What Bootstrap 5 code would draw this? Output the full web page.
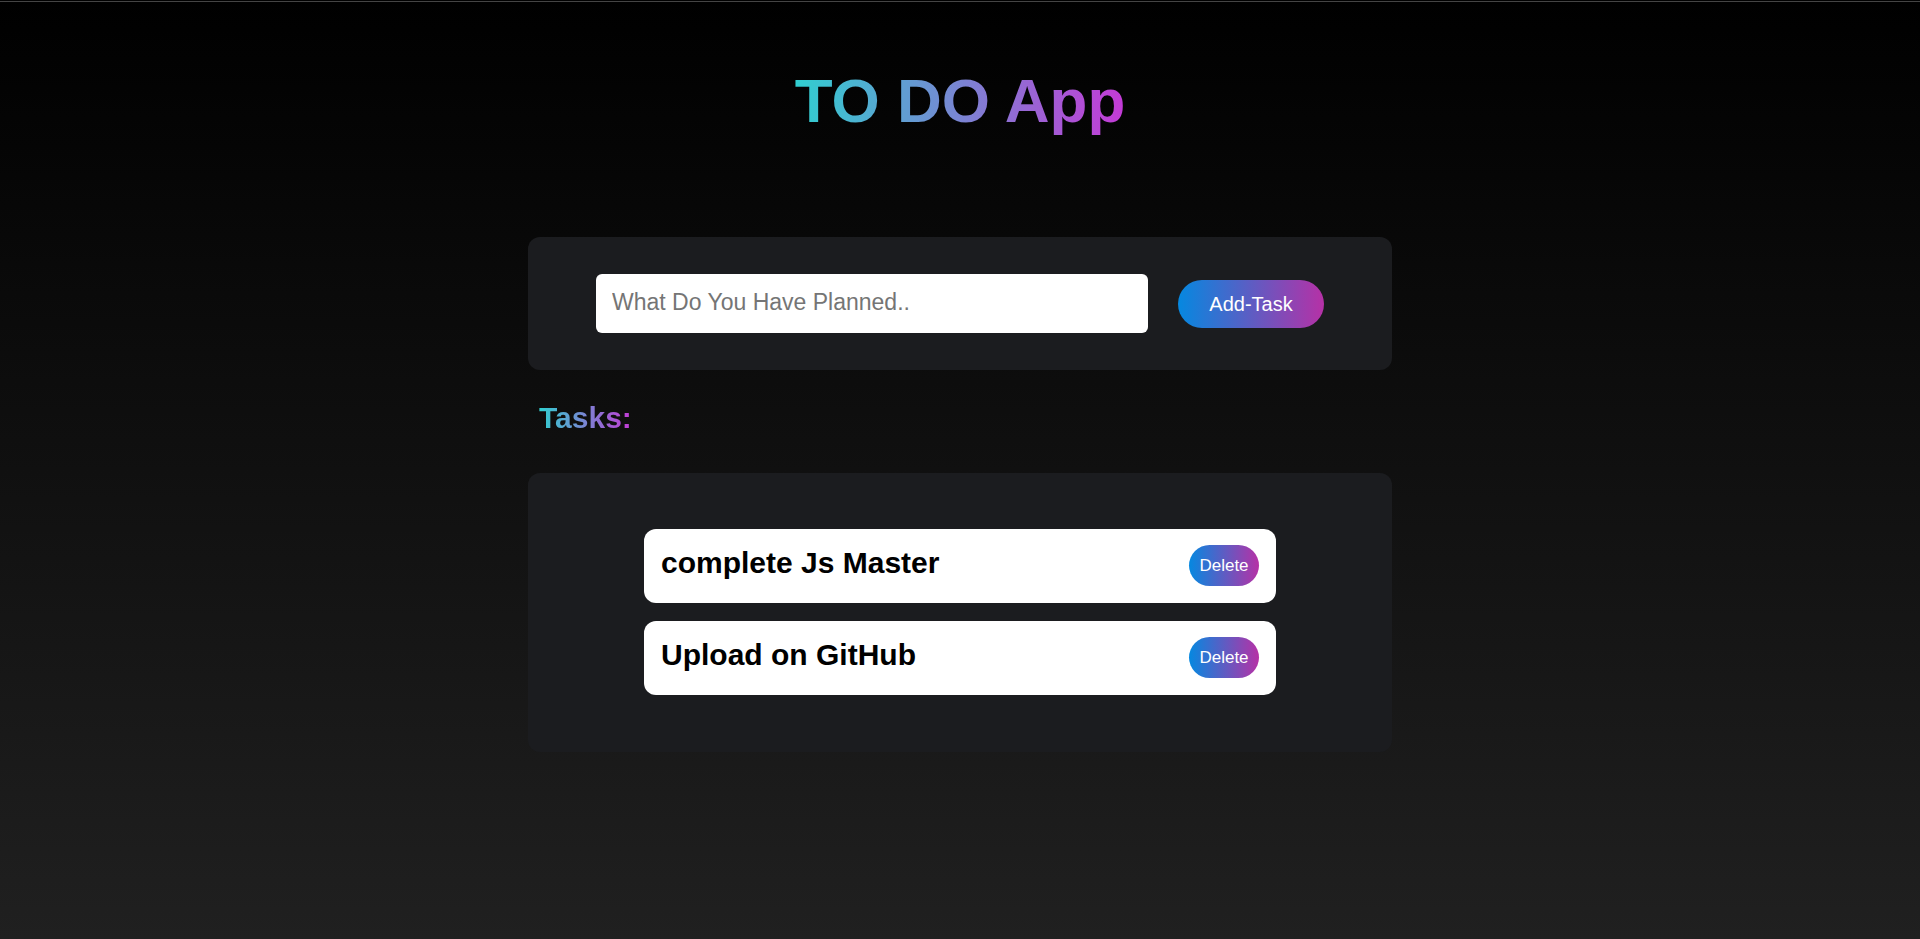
<!DOCTYPE html>
<html lang="en">
<head>
<meta charset="utf-8">
<meta name="viewport" content="width=device-width, initial-scale=1">
<title>TO DO App</title>
<link href="https://cdn.jsdelivr.net/npm/bootstrap@5.3.0/dist/css/bootstrap.min.css" rel="stylesheet">
<style>
  body {
    font-family: "Liberation Sans", Arial, sans-serif;
    background: linear-gradient(#000, #202020) no-repeat;
    border-top: 1px solid #000;
    line-height: 1.2;
  }
  .top-rule { height: 1px; background: #444; }
  .app-column { width: 45%; min-width: 340px; }
  .gradient-text {
    background: linear-gradient(to right, #30cfd0, #c43ad6);
    -webkit-background-clip: text;
    background-clip: text;
    color: transparent;
    width: fit-content;
  }
  .app-title { font-size: 62px; line-height: 72px; margin: 63px auto 100px; }
  .panel { background: #1b1c1f; border-radius: 12px; }
  .task-form { padding: 37px 68px; gap: 30px; }
  .task-input {
    border: 0;
    border-radius: 6px;
    height: 59px;
    padding: 0 16px 2px;
    font-size: 23px;
  }
  .task-input::placeholder { color: #757575; opacity: 1; }
  .btn-gradient, .btn-gradient:hover {
    color: #fff;
    border: 0;
    background: linear-gradient(to right, #0588e0, #b631a6);
  }
  .btn-add { width: 146px; height: 48px; border-radius: 24px; padding: 0; font-size: 20px; }
  .btn-delete { width: 70px; height: 41px; border-radius: 21px; padding: 0; font-size: 17px; }
  .tasks-title { font-size: 30px; line-height: 36px; margin: 30px 0 37px 11px; }
  .task-list { padding: 56px 116px 57px; gap: 18px; }
  .task-item { background: #fff; border-radius: 12px; padding: 16px 17px 17px; }
  .task-name { font-size: 30px; line-height: 36px; color: #000; }
</style>
</head>
<body class="min-vh-100">
<div class="top-rule"></div>
<main class="app-column mx-auto">
  <h1 class="app-title gradient-text fw-bold">TO DO App</h1>
  <form class="panel task-form d-flex align-items-center" onsubmit="return false">
    <input type="text" class="task-input form-control flex-fill" aria-label="New task" placeholder="What Do You Have Planned..">
    <button type="submit" class="btn btn-gradient btn-add flex-shrink-0">Add-Task</button>
  </form>
  <h2 class="tasks-title gradient-text fw-bold">Tasks:</h2>
  <ul class="panel task-list list-unstyled d-flex flex-column mb-0">
    <li class="task-item d-flex justify-content-between align-items-start">
      <span class="task-name fw-bold">complete Js Master</span>
      <button type="button" class="btn btn-gradient btn-delete">Delete</button>
    </li>
    <li class="task-item d-flex justify-content-between align-items-start">
      <span class="task-name fw-bold">Upload on GitHub</span>
      <button type="button" class="btn btn-gradient btn-delete">Delete</button>
    </li>
  </ul>
</main>
<script src="https://cdn.jsdelivr.net/npm/bootstrap@5.3.0/dist/js/bootstrap.bundle.min.js"></script>
</body>
</html>
